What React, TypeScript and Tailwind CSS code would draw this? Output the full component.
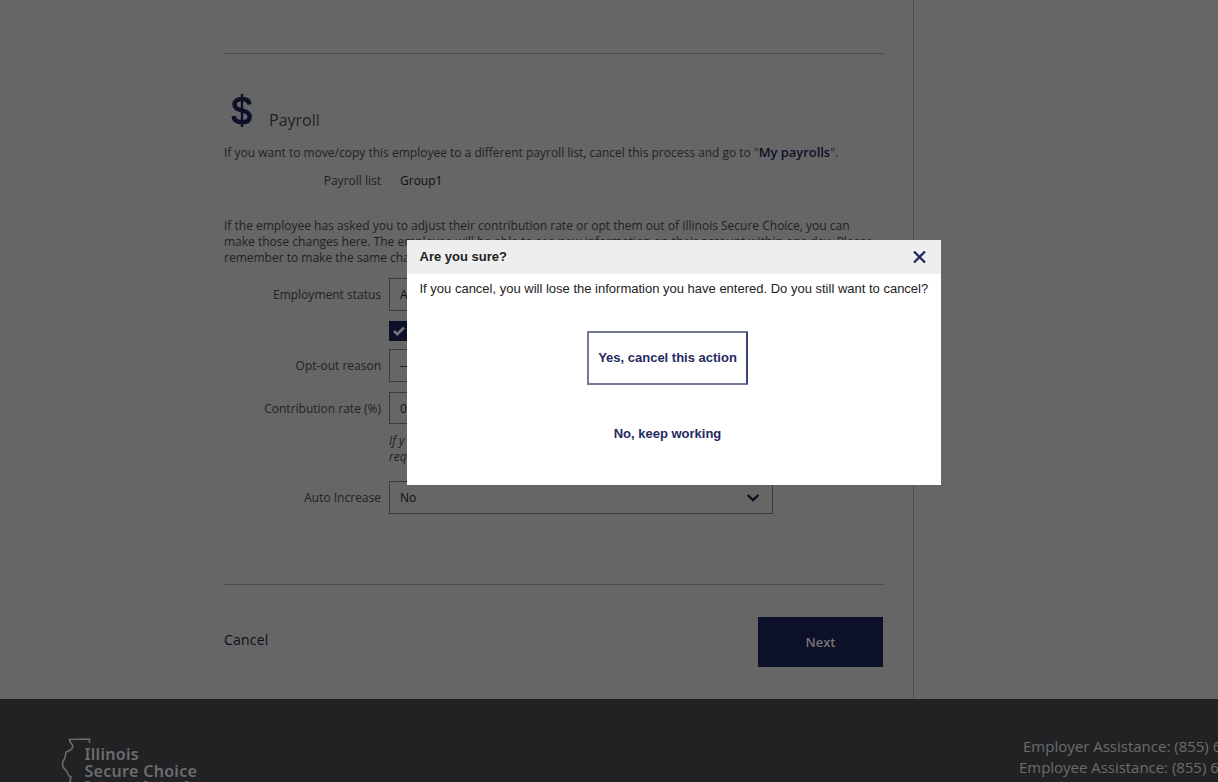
import React from "react";

const label = "w-[157px] shrink-0 text-right";
const field = "flex w-[384px] items-center border border-[#3c3c3c] pl-[10px] text-[#101010]";

function Chevron() {
  return (
    <svg className="ml-auto mr-[12px]" width="14" height="10" viewBox="0 0 14 10" fill="none">
      <path d="M1.5 2L7 7.2L12.5 2" stroke="#0c1020" strokeWidth="2.3" />
    </svg>
  );
}

function PayrollForm() {
  return (
    <main className="flex h-[699px] w-[914px] flex-col border-r border-[#4f4f4f] pl-[224px] pr-[30px] pt-[53px] text-[12px] leading-[16px] text-[#222]">
      <div className="h-px w-[660px] shrink-0 bg-[#4a4a4a]" />
      <div className="mt-[36px] flex h-[42px] shrink-0">
        <svg className="ml-[7px] mt-[4px]" width="22" height="34" viewBox="0 0 22 34" fill="none" stroke="#0c1028">
          <path d="M18.5 10.5C18 6.5 15 5 11 5C6.5 5 3.5 7 3.5 10.5C3.5 14 6 15.3 11 16.4C16 17.6 18.7 19.2 18.7 22.5C18.7 26.5 15.5 28.3 11 28.3C6 28.3 3 26.5 2.6 22" strokeWidth="4.4" />
          <path d="M11 0V33" strokeWidth="2.4" />
        </svg>
        <h2 className="ml-[16px] mt-[18px] text-[16px] leading-[24px]">Payroll</h2>
      </div>
      <p className="mt-[13px] h-[16px] shrink-0 whitespace-nowrap">
        If you want to move/copy this employee to a different payroll list, cancel this process and go to "
        <b className="text-[12.9px] font-semibold leading-none text-[#0c1028]">My payrolls</b>".
      </p>
      <div className="mt-[12px] flex shrink-0">
        <span className={label}>Payroll list</span>
        <span className="ml-[19px] text-[#101010]">Group1</span>
      </div>
      <p className="mt-[29px] shrink-0 whitespace-nowrap">
        If the employee has asked you to adjust their contribution rate or opt them out of Illinois Secure Choice, you can
        <br />
        make those changes here. The employee will be able to see new information on their account within one day. Please
        <br />
        remember to make the same changes
      </p>
      <div className="mt-[12px] flex h-[33px] shrink-0 items-center gap-2">
        <span className={label}>Employment status</span>
        <div className={`${field} h-[33px]`}>A<Chevron /></div>
      </div>
      <div className="ml-[165px] mt-[10px] flex h-[20px] shrink-0 items-center gap-2">
        <span className="flex size-5 items-center justify-center bg-[#0c1028]">
          <svg width="12" height="10" viewBox="0 0 12 10" fill="none">
            <path d="M1 5L4.3 8.2L11 1.5" stroke="#777" strokeWidth="2.6" />
          </svg>
        </span>
      </div>
      <div className="mt-[8px] flex h-[33px] shrink-0 items-center gap-2">
        <span className={label}>Opt-out reason</span>
        <div className={`${field} h-[33px]`}>--<Chevron /></div>
      </div>
      <div className="mt-[10px] flex h-[32px] shrink-0 items-center gap-2 leading-[17px]">
        <span className={`${label} pt-px`}>Contribution rate (%)</span>
        <div className={`${field} h-[32px] pt-px`}>0</div>
      </div>
      <p className="ml-[165px] mt-[9px] h-[32px] shrink-0 italic">
        If y
        <br />
        req
      </p>
      <div className="mt-[16px] flex h-[33px] shrink-0 items-center gap-2">
        <span className={label}>Auto Increase</span>
        <div className={`${field} h-[33px]`}>No<Chevron /></div>
      </div>
      <div className="mt-[70px] h-px w-[659px] shrink-0 bg-[#4a4a4a]" />
      <div className="mt-[32px] flex h-[50px] w-[659px] shrink-0 items-center justify-between">
        <button className="mb-[5px] text-[14px] font-medium tracking-[0.2px] text-[#0a0d1c]">Cancel</button>
        <button className="h-[50px] w-[125px] bg-[#0c1028] text-[13px] font-semibold text-[#777]">Next</button>
      </div>
    </main>
  );
}

function Footer() {
  return (
    <footer className="flex h-[83px] justify-between overflow-hidden bg-[#212224] text-[#6c6c6c]">
      <div className="flex pl-[61px] pt-[39px]">
        <svg width="31" height="54" viewBox="0 0 31 54" fill="none" stroke="#6c6c6c" strokeWidth="1.6">
          <path d="M28.5 5V1L8.5 1.5L9 4L11.5 7V10L9.5 12L5 14L4 20L1.5 24L2 29L6 34L8 38L10 39L9 43L13 48" />
        </svg>
        <div className="-ml-[7.5px] mt-[8px] whitespace-nowrap font-['Noto_Sans'] text-[16px] font-semibold leading-[17px] tracking-[0.3px]">
          Illinois
          <br />
          Secure Choice
          <div className="-mt-px text-[10px] font-normal leading-[12px]">Retirement Savings Program</div>
        </div>
      </div>
      <div className="w-[200px] shrink-0 whitespace-nowrap pt-[37px] text-[15px] leading-[21px]">
        <div className="pl-[5px]">Employer Assistance: (855) 6</div>
        <div className="pl-px tracking-[-0.03px]">Employee Assistance: (855) 6</div>
      </div>
    </footer>
  );
}

function ConfirmDialog() {
  return (
    <div role="dialog" className="absolute left-[407px] top-[240px] flex h-[245px] w-[534px] flex-col items-center bg-white font-['Liberation_Sans',sans-serif] text-[13px] text-[#222]">
      <header className="flex h-[34px] w-full shrink-0 items-center justify-between bg-[#eee] pl-[12.5px] pr-[15px]">
        <h1 className="font-bold">Are you sure?</h1>
        <svg width="13" height="13" viewBox="0 0 13 13" fill="none">
          <path d="M1 0.5L12 11.5M12 0.5L1 11.5" stroke="#1f2a62" strokeWidth="2.3" />
        </svg>
      </header>
      <p className="mt-[5px] w-full whitespace-nowrap pl-[12.5px] leading-[20px]">
        If you cancel, you will lose the information you have entered. Do you still want to cancel?
      </p>
      <button className="mr-[13px] mt-[32px] h-[54px] w-[161px] rounded-[1px] border-2 border-[#737993] border-r-[#3d4677] font-bold text-[#1f2a62]">
        Yes, cancel this action
      </button>
      <button className="mr-[13px] mt-[39px] font-bold text-[#1f2a62]">No, keep working</button>
    </div>
  );
}

export default function App() {
  return (
    <div className="relative h-[782px] w-[1218px] overflow-hidden bg-[#666] font-['Open_Sans',sans-serif]">
      <PayrollForm />
      <Footer />
      <ConfirmDialog />
    </div>
  );
}
